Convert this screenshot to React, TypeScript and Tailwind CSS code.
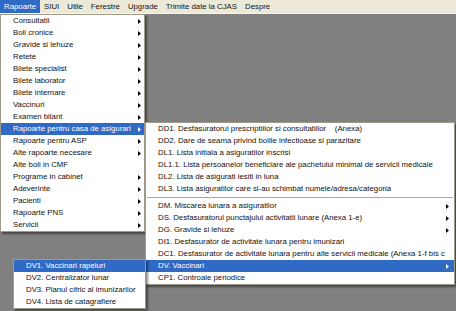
import React from "react";

type Row = { label: string; arrow?: boolean; active?: boolean } | "sep";

const mainItems: Row[] = [
  { label: "Consultatii", arrow: true },
  { label: "Boli cronice", arrow: true },
  { label: "Gravide si lehuze", arrow: true },
  { label: "Retete", arrow: true },
  { label: "Bilete specialist", arrow: true },
  { label: "Bilete laborator", arrow: true },
  { label: "Bilete internare", arrow: true },
  { label: "Vaccinuri", arrow: true },
  { label: "Examen bilant", arrow: true },
  { label: "Rapoarte pentru casa de asigurari", arrow: true, active: true },
  { label: "Rapoarte pentru ASP", arrow: true },
  { label: "Alte rapoarte necesare", arrow: true },
  { label: "Alte boli in CMF" },
  { label: "Programe in cabinet", arrow: true },
  { label: "Adeverinte", arrow: true },
  { label: "Pacienti", arrow: true },
  { label: "Rapoarte PNS", arrow: true },
  { label: "Servicii", arrow: true },
];

const casaItems: Row[] = [
  { label: "DD1. Desfasuratorul prescriptiilor si consultatiilor\u00a0\u00a0\u00a0\u00a0(Anexa)" },
  { label: "DD2. Dare de seama privind bolile infectioase si parazitare" },
  { label: "DL1. Lista initiala a asiguratilor inscrisi" },
  { label: "DL1.1. Lista persoanelor beneficiare ale pachetului minimal de servicii medicale" },
  { label: "DL2. Lista de asigurati iesiti in luna" },
  { label: "DL3. Lista asiguratilor care si-au schimbat numele/adresa/categoria" },
  "sep",
  { label: "DM. Miscarea lunara a asiguratilor", arrow: true },
  { label: "DS. Desfasuratorul punctajului activitatii lunare (Anexa 1-e)", arrow: true },
  { label: "DG. Gravide si lehuze", arrow: true },
  { label: "DI1. Desfasurator de activitate lunara pentru imunizari" },
  { label: "DC1. Desfasurator de activitate lunara pentru alte servicii medicale (Anexa 1-f bis c" },
  { label: "DV. Vaccinari", arrow: true, active: true },
  { label: "CP1. Controale periodice" },
];

const vaccItems: Row[] = [
  { label: "DV1. Vaccinari rapeluri", active: true },
  { label: "DV2. Centralizator lunar" },
  { label: "DV3. Planul cifric al imunizarilor" },
  { label: "DV4. Lista de catagrafiere" },
];

const menuBar = ["Rapoarte", "SIUI", "Utile", "Ferestre", "Upgrade", "Trimite date la CJAS", "Despre"];

function Arrow({ white }: { white?: boolean }) {
  return (
    <svg width="3" height="5" viewBox="0 0 3 5" className="shrink-0">
      <polygon points="0,0 3,2.5 0,5" fill={white ? "#ffffff" : "#000000"} />
    </svg>
  );
}

function Menu({ items, className, arrowPad }: { items: Row[]; className: string; arrowPad: string }) {
  return (
    <div
      className={`absolute bg-white border border-[#9d9a8c] shadow-[2px_2px_2px_rgba(0,0,0,0.45)] flex flex-col ${className}`}
    >
      {items.map((it, i) =>
        it === "sep" ? (
          <div key={i} className="h-[5px] flex items-center px-[1px]">
            <div className="h-px w-full bg-[#aca899]" />
          </div>
        ) : (
          <div
            key={i}
            className={`h-[12px] flex items-center justify-between pl-[12px] ${arrowPad} whitespace-nowrap ${
              it.active ? "bg-[#316ac5] text-white" : "text-[#111]"
            }`}
          >
            <span>{it.label}</span>
            {it.arrow && <Arrow white={it.active} />}
          </div>
        )
      )}
    </div>
  );
}

export default function App() {
  return (
    <div className="w-[456px] h-[311px] relative overflow-hidden bg-[#808080] flex flex-col font-['Liberation_Sans',Arial,sans-serif] text-[7.8px] leading-none">
      <div className="h-[14px] bg-[#ece9d8] border-b border-[#f6f5ee] flex items-stretch shrink-0">
        {menuBar.map((m, i) => (
          <div
            key={m}
            className={`flex items-center px-[4px] ${i === 0 ? "bg-[#316ac5] text-white" : "text-[#111]"}`}
          >
            {m}
          </div>
        ))}
      </div>
      <div className="flex-1" />

      <Menu items={mainItems} className="left-0 top-[14px] w-[145px]" arrowPad="pr-[3px]" />
      <Menu items={casaItems} className="left-[145px] top-[122px] w-[310px]" arrowPad="pr-[5px]" />
      <Menu items={vaccItems} className="left-[13px] top-[259px] w-[133px]" arrowPad="pr-[5px]" />
    </div>
  );
}
